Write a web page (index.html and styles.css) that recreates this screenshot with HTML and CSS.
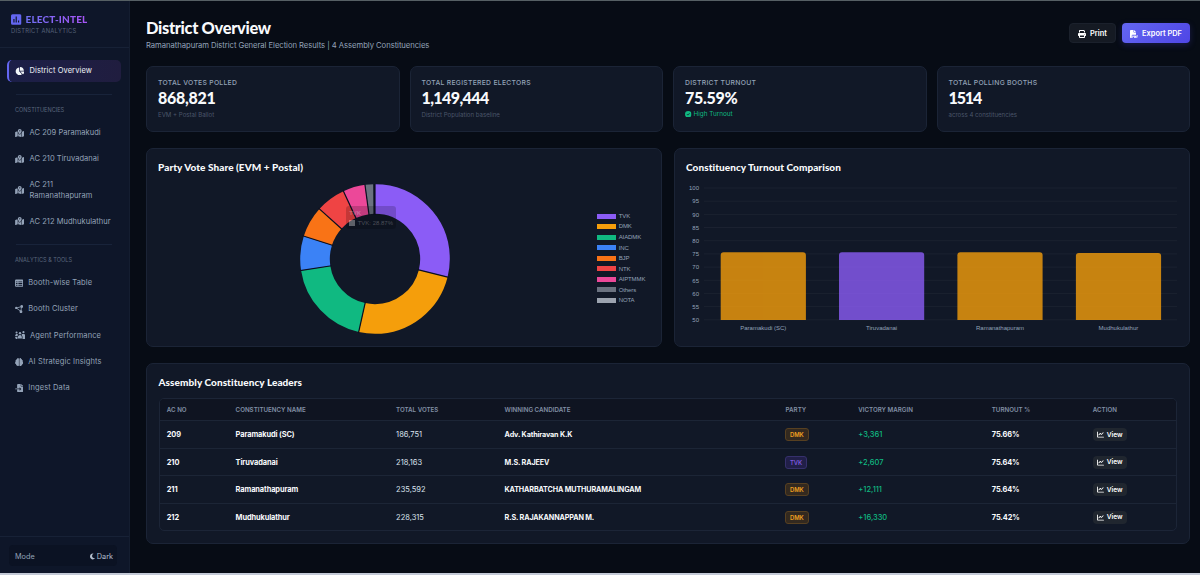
FILE: index.html
```html
<!DOCTYPE html>
<html lang="en">
<head>
<meta charset="utf-8">
<title>Elect-Intel – District Overview</title>
<link rel="stylesheet" href="styles.css">
</head>
<body>
<svg class="defs" aria-hidden="true">
  <symbol id="i-poll" viewBox="0 0 448 448"><path fill-rule="evenodd" d="M64 0h320a64 64 0 0 1 64 64v320a64 64 0 0 1-64 64H64a64 64 0 0 1-64-64V64A64 64 0 0 1 64 0zM100 200v150h50V200zM198 96v254h50V96zM298 264v86h50v-86z"/></symbol>
  <symbol id="i-pie" viewBox="0 0 576 512"><path d="M304 240V16.6c0-9 7-16.6 16-16.6C443.7 0 544 100.3 544 224c0 9-7.6 16-16.6 16H304zM32 272C32 150.7 122.1 50.3 239 34.3c9.2-1.3 17 6.1 17 15.4V288L412.5 444.5c6.7 6.7 6.2 17.7-1.5 23.1C371.8 495.6 323.8 512 272 512C139.5 512 32 404.6 32 272zm526.4 16c9.3 0 16.6 7.8 15.4 17c-7.7 55.9-34.6 105.6-73.9 142.3c-6 5.6-15.4 5.2-21.2-.7L320 288H558.4z"/></symbol>
  <symbol id="i-map" viewBox="0 0 576 512"><path d="M408 120c0 54.6-73.1 151.9-105.2 192c-7.7 9.6-22 9.6-29.6 0C241.1 271.9 168 174.6 168 120C168 53.7 221.7 0 288 0s120 53.7 120 120zm8 80.4c3.5-6.9 6.7-13.8 9.6-20.6c.5-1.2 1-2.5 1.5-3.7l116-46.4C558.9 123.4 576 135 576 152V422.8c0 9.8-6 18.6-15.1 22.3L416 503V200.4zM137.6 138.3c2.4 14.1 7.2 28.3 12.8 41.5c2.9 6.8 6.1 13.7 9.6 20.6V451.8L32.9 502.7C17.1 509 0 497.4 0 480.4V209.6c0-9.8 6-18.6 15.1-22.3l122.6-49zM327.8 332c13.9-17.4 35.7-45.7 56.2-77V504.3L192 449.4V255c20.5 31.3 42.3 59.6 56.2 77c20.5 25.6 59.1 25.6 79.6 0zM288 152a40 40 0 1 0 0-80 40 40 0 1 0 0 80z"/></symbol>
  <symbol id="i-table" viewBox="0 0 512 512"><path fill-rule="evenodd" d="M64 32h384a64 64 0 0 1 64 64v320a64 64 0 0 1-64 64H64a64 64 0 0 1-64-64V96a64 64 0 0 1 64-64zM64 152v56h88v-56zM208 152v56h240v-56zM64 256v56h88v-56zM208 256v56h240v-56zM64 360v56h88v-56zM208 360v56h240v-56z"/></symbol>
  <symbol id="i-nodes" viewBox="0 0 512 512"><path d="M80 190 400 100 370 400z" fill="none" stroke="currentColor" stroke-width="52"/><circle cx="76" cy="180" r="74"/><circle cx="420" cy="92" r="88"/><circle cx="370" cy="420" r="88"/></symbol>
  <symbol id="i-users" viewBox="0 0 640 512"><circle cx="100" cy="90" r="66"/><circle cx="320" cy="130" r="76"/><circle cx="540" cy="70" r="70"/><path d="M10 300c0-70 50-110 110-110 40 0 70 20 84 50-30 30-44 60-50 90H30c-12 0-20-12-20-30zM180 400c0-90 60-150 140-150s120 60 120 150v80H180zM460 190h120c36 0 60 40 60 90v230H480V400c0-70-20-110-60-150 6-30 20-50 40-60zM0 370h150v140H60z"/></symbol>
  <symbol id="i-brain" viewBox="0 0 512 512"><path d="M184 0c32 0 56 25 56 56v400c0 31-25 56-56 56-29 0-53-20-56-48-38 6-72-26-64-68-40-16-64-50-64-88 0-30 16-56 36-70C8 190 32 140 72 132c-8-40 20-72 56-76 0-31 25-56 56-56zM328 0c-32 0-56 25-56 56v400c0 31 25 56 56 56 29 0 53-20 56-48 38 6 72-26 64-68 40-16 64-50 64-88 0-30-16-56-36-70 28-48 4-98-36-106 8-40-20-72-56-76 0-31-25-56-56-56z"/></symbol>
  <symbol id="i-import" viewBox="0 0 512 512"><path fill-rule="evenodd" d="M128 64c0-35 29-64 64-64h160v128c0 18 14 32 32 32h128v288c0 35-29 64-64 64H192c-35 0-64-29-64-64V336h174l-39 39 34 34 97-97-97-97-34 34 39 39H128zM384 0l128 128H384zM24 288h104v48H24a24 24 0 0 1 0-48z"/></symbol>
  <symbol id="i-moon" viewBox="0 0 384 512"><path d="M223.5 32C100 32 0 132.3 0 256S100 480 223.5 480c60.6 0 115.5-24.2 155.8-63.4c5-4.9 6.3-12.5 3.1-18.7s-10.1-9.7-17-8.5c-9.8 1.7-19.8 2.6-30.1 2.6c-96.9 0-175.5-78.8-175.5-176c0-65.8 36-123.1 89.3-153.3c6.1-3.5 9.2-10.5 7.7-17.3s-7.3-11.9-14.3-12.5c-6.3-.5-12.6-.8-19-.8z"/></symbol>
  <symbol id="i-print" viewBox="0 0 512 512"><path d="M128 0C92.7 0 64 28.7 64 64v96h64V64H354.7L384 93.3V160h64V93.3c0-17-6.7-33.3-18.7-45.3L400 18.7C388 6.7 371.7 0 354.7 0H128zM384 352v32 64H128V384 368 352H384zm64 32h32c17.7 0 32-14.3 32-32V256c0-35.3-28.7-64-64-64H64c-35.3 0-64 28.7-64 64v96c0 17.7 14.3 32 32 32H64v64c0 35.3 28.7 64 64 64H384c35.3 0 64-28.7 64-64V384zM432 248a24 24 0 1 1 0 48 24 24 0 1 1 0-48z"/></symbol>
  <symbol id="i-pdf" viewBox="0 0 512 512"><path d="M64 0h160v128c0 18 14 32 32 32h128v144H176c-35 0-64 29-64 64v144H64c-35 0-64-29-64-64V64C0 29 29 0 64 0zM256 0l128 128H256z"/><path d="M150 350h50c60 0 60 96 0 96h-14v60h-36zM270 350h60c34 0 50 20 50 50v56c0 30-16 50-50 50h-60zM410 350h100v44h-60v30h50v40h-50v42h-40z"/></symbol>
  <symbol id="i-check" viewBox="0 0 512 512"><path d="M256 512A256 256 0 1 0 256 0a256 256 0 1 0 0 512zM369 209L241 337c-9.4 9.4-24.6 9.4-33.9 0l-64-64c-9.4-9.4-9.4-24.6 0-33.9s24.6-9.4 33.9 0l47 47L335 175c9.4-9.4 24.6-9.4 33.9 0s9.4 24.6 0 33.9z"/></symbol>
  <symbol id="i-line" viewBox="0 0 512 512"><path d="M64 64c0-17.7-14.3-32-32-32S0 46.3 0 64V400c0 44.2 35.8 80 80 80H480c17.7 0 32-14.3 32-32s-14.3-32-32-32H80c-8.8 0-16-7.2-16-16V64zm406.6 86.6c12.5-12.5 12.5-32.8 0-45.3s-32.8-12.5-45.3 0L320 210.7l-57.4-57.4c-12.5-12.5-32.8-12.5-45.3 0l-112 112c-12.5 12.5-12.5 32.8 0 45.3s32.8 12.5 45.3 0L240 221.3l57.4 57.4c12.5 12.5 32.8 12.5 45.3 0l128-128z"/></symbol>
</svg>
<div class="app">
  <aside class="sidebar">
    <header class="brand">
      <div class="brand-row"><svg class="brand-icon"><use href="#i-poll"/></svg><span class="brand-name">ELECT-INTEL</span></div>
      <div class="brand-sub">DISTRICT ANALYTICS</div>
    </header>
    <nav class="nav">
      <a class="item active"><svg class="ico"><use href="#i-pie"/></svg><span>District Overview</span></a>
      <hr class="rule rule-first">
      <div class="nav-title">CONSTITUENCIES</div>
      <a class="item"><svg class="ico"><use href="#i-map"/></svg><span>AC 209 Paramakudi</span></a>
      <a class="item"><svg class="ico"><use href="#i-map"/></svg><span>AC 210 Tiruvadanai</span></a>
      <a class="item tall"><svg class="ico"><use href="#i-map"/></svg><span>AC 211<br>Ramanathapuram</span></a>
      <a class="item"><svg class="ico"><use href="#i-map"/></svg><span>AC 212 Mudhukulathur</span></a>
      <hr class="rule">
      <div class="nav-title">ANALYTICS &amp; TOOLS</div>
      <a class="item tool"><svg class="ico"><use href="#i-table"/></svg><span>Booth-wise Table</span></a>
      <a class="item tool"><svg class="ico"><use href="#i-nodes"/></svg><span>Booth Cluster</span></a>
      <a class="item tool wide"><svg class="ico"><use href="#i-users"/></svg><span>Agent Performance</span></a>
      <a class="item tool"><svg class="ico"><use href="#i-brain"/></svg><span>AI Strategic Insights</span></a>
      <a class="item tool"><svg class="ico"><use href="#i-import"/></svg><span>Ingest Data</span></a>
    </nav>
    <footer class="mode"><div class="mode-row"><span>Mode</span><span class="mode-value"><svg class="moon"><use href="#i-moon"/></svg><span>Dark</span></span></div></footer>
  </aside>

  <main class="main">
    <header class="head">
      <div>
        <h1>District Overview</h1>
        <p class="lead">Ramanathapuram District General Election Results | 4 Assembly Constituencies</p>
      </div>
      <div class="actions">
        <button class="btn print"><svg><use href="#i-print"/></svg><span>Print</span></button>
        <button class="btn export"><svg><use href="#i-pdf"/></svg><span>Export PDF</span></button>
      </div>
    </header>

    <section class="stats">
      <div class="card stat"><div class="label">TOTAL VOTES POLLED</div><div class="value">868,821</div><div class="note">EVM + Postal Ballot</div></div>
      <div class="card stat"><div class="label">TOTAL REGISTERED ELECTORS</div><div class="value snug">1,149,444</div><div class="note">District Population baseline</div></div>
      <div class="card stat"><div class="label">DISTRICT TURNOUT</div><div class="value">75.59%</div><div class="note good"><svg><use href="#i-check"/></svg><span>High Turnout</span></div></div>
      <div class="card stat"><div class="label">TOTAL POLLING BOOTHS</div><div class="value tight">1514</div><div class="note">across 4 constituencies</div></div>
    </section>

    <section class="charts">
      <div class="card chart">
        <h2>Party Vote Share (EVM + Postal)</h2>
        <div class="share">
          <div class="donut-wrap">
            <svg class="donut" viewBox="-75 -75 150 150">
              <g transform="rotate(-90)" fill="none" stroke-width="29.6">
                <circle r="60" pathLength="360" stroke="#8b5cf6" stroke-dasharray="104 360"/>
                <circle r="60" pathLength="360" stroke="#f59e0b" stroke-dasharray="88.6 360" stroke-dashoffset="-104"/>
                <circle r="60" pathLength="360" stroke="#10b981" stroke-dasharray="68.6 360" stroke-dashoffset="-192.6"/>
                <circle r="60" pathLength="360" stroke="#3b82f6" stroke-dasharray="26.6 360" stroke-dashoffset="-261.2"/>
                <circle r="60" pathLength="360" stroke="#f97316" stroke-dasharray="24.2 360" stroke-dashoffset="-287.8"/>
                <circle r="60" pathLength="360" stroke="#ef4444" stroke-dasharray="23 360" stroke-dashoffset="-312"/>
                <circle r="60" pathLength="360" stroke="#ec4899" stroke-dasharray="17.3 360" stroke-dashoffset="-335"/>
                <circle r="60" pathLength="360" stroke="#6b7280" stroke-dasharray="6.5 360" stroke-dashoffset="-352.3"/>
              </g>
              <g stroke="#0b1020" stroke-width="1.2">
                <path d="M-.5-44V-76" stroke-width="2.2"/>
                <path d="M0-44V-76" transform="rotate(104)"/>
                <path d="M0-44V-76" transform="rotate(192.6)"/>
                <path d="M0-44V-76" transform="rotate(261.2)"/>
                <path d="M0-44V-76" transform="rotate(287.8)"/>
                <path d="M0-44V-76" transform="rotate(312)"/>
                <path d="M0-44V-76" transform="rotate(335)"/>
                <path d="M0-44V-76" transform="rotate(352.3)"/>
              </g>
            </svg>
            <div class="tip"><b>TVK</b><div><i></i><span>TVK: 28.87%</span></div></div>
          </div>
          <ul class="legend">
            <li><i class="c-tvk"></i>TVK</li>
            <li><i class="c-dmk"></i>DMK</li>
            <li><i class="c-aiadmk"></i>AIADMK</li>
            <li><i class="c-inc"></i>INC</li>
            <li><i class="c-bjp"></i>BJP</li>
            <li><i class="c-ntk"></i>NTK</li>
            <li><i class="c-aip"></i>AIPTMMK</li>
            <li><i class="c-oth"></i>Others</li>
            <li><i class="c-nota"></i>NOTA</li>
          </ul>
        </div>
      </div>
      <div class="card chart">
        <h2>Constituency Turnout Comparison</h2>
        <svg class="bars" viewBox="686 182 492 152">
          <g class="grid">
            <path d="M704 188H1177M704 201.2H1177M704 214.4H1177M704 227.5H1177M704 240.7H1177M704 253.9H1177M704 267.1H1177M704 280.3H1177M704 293.4H1177M704 306.6H1177M704 319.8H1177"/>
          </g>
          <g class="ticks">
            <text x="699" y="190.2">100</text><text x="699" y="203.4">95</text><text x="699" y="216.6">90</text><text x="699" y="229.7">85</text><text x="699" y="242.9">80</text><text x="699" y="256.1">75</text><text x="699" y="269.3">70</text><text x="699" y="282.5">65</text><text x="699" y="295.6">60</text><text x="699" y="308.8">55</text><text x="699" y="322">50</text>
          </g>
          <g opacity=".8">
            <path fill="#f59e0b" d="M720.7 320V255.2a3 3 0 0 1 3-3h79.2a3 3 0 0 1 3 3V320z"/>
            <path fill="#8b5cf6" d="M839 320V255.2a3 3 0 0 1 3-3h79.2a3 3 0 0 1 3 3V320z"/>
            <path fill="#f59e0b" d="M957.4 320V255.2a3 3 0 0 1 3-3h79.2a3 3 0 0 1 3 3V320z"/>
            <path fill="#f59e0b" d="M1075.9 320V255.9a3 3 0 0 1 3-3h79.2a3 3 0 0 1 3 3V320z"/>
          </g>
          <g class="names"><text x="763.3" y="330.2">Paramakudi (SC)</text><text x="881.6" y="330.2">Tiruvadanai</text><text x="1000" y="330.2">Ramanathapuram</text><text x="1118.4" y="330.2">Mudhukulathur</text></g>
        </svg>
      </div>
    </section>

    <section class="card leaders">
      <h2>Assembly Constituency Leaders</h2>
      <div class="table-box">
        <table>
          <colgroup><col class="w1"><col class="w2"><col class="w3"><col class="w4"><col class="w5"><col class="w6"><col class="w7"><col></colgroup>
          <thead><tr><th>AC NO</th><th>CONSTITUENCY NAME</th><th>TOTAL VOTES</th><th>WINNING CANDIDATE</th><th>PARTY</th><th>VICTORY MARGIN</th><th>TURNOUT %</th><th>ACTION</th></tr></thead>
          <tbody>
            <tr><td class="b">209</td><td class="b">Paramakudi (SC)</td><td>186,751</td><td class="b who">Adv. Kathiravan K.K</td><td><span class="tag dmk">DMK</span></td><td class="up">+3,361</td><td class="b">75.66%</td><td><a class="view"><svg><use href="#i-line"/></svg><span>View</span></a></td></tr>
            <tr><td class="b">210</td><td class="b">Tiruvadanai</td><td>218,163</td><td class="b who">M.S. RAJEEV</td><td><span class="tag tvk">TVK</span></td><td class="up">+2,607</td><td class="b">75.64%</td><td><a class="view"><svg><use href="#i-line"/></svg><span>View</span></a></td></tr>
            <tr><td class="b">211</td><td class="b">Ramanathapuram</td><td>235,592</td><td class="b who">KATHARBATCHA MUTHURAMALINGAM</td><td><span class="tag dmk">DMK</span></td><td class="up">+12,111</td><td class="b">75.64%</td><td><a class="view"><svg><use href="#i-line"/></svg><span>View</span></a></td></tr>
            <tr><td class="b">212</td><td class="b">Mudhukulathur</td><td>228,315</td><td class="b who">R.S. RAJAKANNAPPAN M.</td><td><span class="tag dmk">DMK</span></td><td class="up">+16,330</td><td class="b">75.42%</td><td><a class="view"><svg><use href="#i-line"/></svg><span>View</span></a></td></tr>
          </tbody>
        </table>
      </div>
    </section>
  </main>
</div>
</body>
</html>
```
FILE: styles.css
```css
* { box-sizing: border-box; margin: 0; padding: 0; }
body {
  width: 1200px; height: 575px; overflow: hidden;
  background: #070c15; color: #f8fafc;
  font-family: Inter, "Liberation Sans", sans-serif; font-size: 7.5px;
  border-top: 1px solid #566064; border-bottom: 2px solid #c3c9d6;
}
.defs { display: none; }
svg { fill: currentColor; display: block; flex: none; }
.app { display: flex; height: 100%; }

.sidebar { width: 130px; background: #0e1629; border-right: 1px solid #141d30; display: flex; flex-direction: column; flex: none; }
.brand { height: 47px; border-bottom: 1px solid #172136; padding: 12px 0 0 11px; }
.brand-row { display: flex; align-items: center; gap: 4px; height: 12px; }
.brand-icon { width: 10.5px; height: 11px; color: #6366f1; }
.brand-name { font: 900 10px/12px Lato, sans-serif; letter-spacing: .17px; background: linear-gradient(90deg, #6f6ff4, #a855f7); -webkit-background-clip: text; background-clip: text; color: transparent; }
.brand-sub { font-size: 5.8px; line-height: 8px; margin-top: 2.4px; color: #56627a; letter-spacing: .26px; }
.nav { padding: 12px 8px 0 7px; flex: 1; }
.item { display: flex; align-items: center; gap: 5.5px; height: 22px; margin-bottom: 4.3px; padding-left: 7.5px; color: #94a3b8; font-size: 7.5px; line-height: 10.2px; letter-spacing: .05px; white-space: nowrap; }
.item span { padding-top: .6px; }
.item.tall { height: 31.5px; }
.ico { width: 9.5px; height: 8.2px; }
.item.tool { letter-spacing: .12px; margin-bottom: 4.3px; }
.tool .ico { width: 8.3px; }
.wide .ico { width: 10px; }
.item.active { background: linear-gradient(90deg, #1c1f48, #201d3f); color: #f1f5f9; border-left: 2px solid #6366f1; border-radius: 5px; padding-left: 5.5px; margin-bottom: 0; letter-spacing: .1px; }
.rule { border: 0; border-top: 1px solid #18233a; margin: 11.4px 9px 11.2px; }
.rule-first { margin-top: 12px; }
.nav-title { color: #5b677e; font-size: 5.6px; line-height: 8px; padding-left: 8px; margin-bottom: 7.8px; }
.mode { height: 37px; border-top: 1px solid #172136; padding: 8px 12px 0 9px; }
.mode-row { display: flex; justify-content: space-between; align-items: center; height: 21px; padding: 1px 4px 0 6px; background: #0b1223; border-radius: 4px; color: #94a3b8; font-size: 7.3px; }
.mode-value { display: flex; align-items: center; gap: 1.5px; color: #b4bfce; }
.moon { width: 5px; height: 7px; }

.main { flex: 1; padding: 16px 10px 0 16px; }
.head { display: flex; justify-content: space-between; height: 48.6px; }
h1, h2, .value { font-family: Lato, sans-serif; font-weight: 900; }
h1 { font-size: 16.4px; line-height: 22px; letter-spacing: -.32px; }
.lead { font-size: 7.7px; line-height: 11px; margin-top: .6px; letter-spacing: -.055px; color: #94a3b8; }
.actions { display: flex; gap: 6px; padding-top: 6px; }
.btn { display: flex; align-items: center; justify-content: center; gap: 4px; height: 20px; padding-top: 1px; border: 0; border-radius: 4px; color: #fff; font: 600 7.4px/10px Inter, sans-serif; }
.btn svg { width: 8px; height: 8px; }
.print { width: 47px; background: #151a23; border: 1px solid #1b212c; }
.export { width: 68px; background: linear-gradient(135deg, #6366f1, #4f46e5); box-shadow: 0 2px 6px #4f46e540; }

.card { background: #111827; border: 1px solid #1b2436; border-radius: 7px; }
.stats { display: grid; grid-template-columns: repeat(4, 1fr); gap: 10px; }
.stat { height: 66px; padding: 11.6px 0 0 11px; }
.label { font-size: 6.8px; line-height: 10px; letter-spacing: .28px; font-weight: 500; color: #94a3b8; }
.value { font-size: 16px; line-height: 20px; letter-spacing: -.3px; margin-top: .3px; }
.snug { letter-spacing: -.6px; }
.tight { letter-spacing: -1.1px; }
.note { font-size: 6.1px; line-height: 9px; margin-top: 1.1px; color: #4b566a; display: flex; align-items: center; gap: 2px; }
.note svg { width: 6.5px; height: 6.5px; }
.good { color: #10b981; font-size: 6.4px; }

.charts { display: grid; grid-template-columns: 1fr 1fr; gap: 12px; margin-top: 16px; }
.chart { height: 199.5px; padding: 11.3px 0 0 11px; }
h2 { font-size: 10px; line-height: 14px; letter-spacing: .07px; }
.share { display: flex; margin-top: 10px; }
.donut-wrap { position: relative; width: 150px; height: 150px; margin-left: 141.7px; }
.donut { width: 150px; height: 150px; }
.tip { position: absolute; left: 46px; top: 22.5px; width: 50px; height: 23px; border-radius: 3px; background: #0000002e; color: #ffffff42; font: 6px/10px "Liberation Sans", sans-serif; padding: 1.5px 3.5px; }
.tip b { display: block; }
.tip div { display: flex; align-items: center; gap: 3px; white-space: nowrap; }
.tip i { width: 5.5px; height: 5.5px; flex: none; background: #ffffff55; }
.legend { list-style: none; margin: 27px 0 0 147px; color: #94a3b8; font: 6px/10.55px "Liberation Sans", sans-serif; letter-spacing: -.1px; }
.legend li { display: flex; align-items: center; gap: 3px; height: 10.55px; }
.legend i { width: 19px; height: 5px; }
.c-tvk { background: #8b5cf6; } .c-dmk { background: #f59e0b; } .c-aiadmk { background: #10b981; }
.c-inc { background: #3b82f6; } .c-bjp { background: #f97316; } .c-ntk { background: #ef4444; }
.c-aip { background: #ec4899; } .c-oth { background: #6b7280; } .c-nota { background: #9ca3af; }
.bars { width: 492px; height: 152px; margin-top: 8.1px; font: 6px "Liberation Sans", sans-serif; fill: #94a3b8; }
.grid path { stroke: #ffffff0f; stroke-width: .8; }
.ticks text { text-anchor: end; }
.names text { text-anchor: middle; }

.leaders { height: 181px; margin-top: 16px; padding: 10.8px 12px 0 11.5px; }
.table-box { margin-top: 9px; border: 1px solid #1c2537; border-radius: 5px; overflow: hidden; }
table { width: 100%; table-layout: fixed; border-collapse: separate; border-spacing: 0; }
.w1 { width: 68.8px; } .w2 { width: 160.5px; } .w3 { width: 108.5px; } .w4 { width: 281px; } .w5 { width: 72.7px; } .w6 { width: 133.5px; } .w7 { width: 101px; }
th { height: 21.5px; padding: 0 0 0 7.3px; text-align: left; font-size: 6.2px; font-weight: 600; color: #8290a6; background: #0f1421; }
td { height: 27.5px; padding: .2px 0 0 7.3px; border-top: 1px solid #1c2536; font-size: 7.5px; color: #dbe3ee; white-space: nowrap; }
.b { font-weight: 700; font-size: 7.4px; letter-spacing: -.1px; color: #f8fafc; }
.who { font-size: 7.2px; letter-spacing: -.14px; }
.up { color: #10b981; font-weight: 500; }
.tag { display: inline-block; height: 13px; margin-left: -.7px; padding: 0 4px; border: 1px solid; border-radius: 3px; font-size: 5.9px; line-height: 11px; font-weight: 600; }
.dmk { color: #f0a020; background: #33291f; border-color: #574021; }
.tvk { color: #7c58dc; background: #211f48; border-color: #36306c; }
.view { display: inline-flex; align-items: center; gap: 3px; height: 13px; padding: 0 4px; background: #20262f; border-radius: 4px; font-size: 6.6px; letter-spacing: 0; font-weight: 600; color: #fff; vertical-align: middle; }
.view svg { width: 7px; height: 7px; }
```
